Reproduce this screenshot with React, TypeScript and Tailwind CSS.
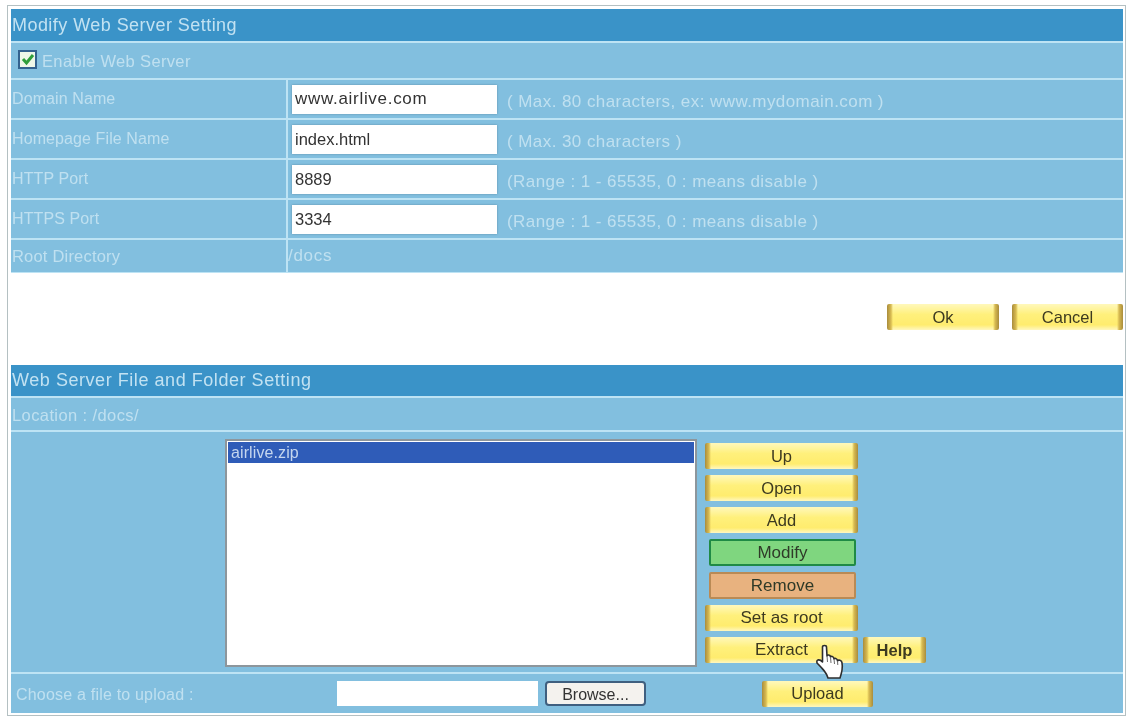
const rows = [
  { label: 'Domain Name', value: 'www.airlive.com', hint: '( Max. 80 characters, ex: www.mydomain.com )', spacing: 'text-[17px] tracking-[0.7px]' },
  { label: 'Homepage File Name', value: 'index.html', hint: '( Max. 30 characters )', spacing: 'text-[16.5px] tracking-normal' },
  { label: 'HTTP Port', value: '8889', hint: '(Range : 1 - 65535, 0 : means disable )', spacing: 'text-[16.5px] tracking-normal' },
  { label: 'HTTPS Port', value: '3334', hint: '(Range : 1 - 65535, 0 : means disable )', spacing: 'text-[16.5px] tracking-normal' },
];

function GoldButton({ label, className = '' }: { label: string; className?: string }) {
  return (
    <button
      className={`flex h-[26px] shrink-0 items-center justify-center rounded-[2px] bg-[linear-gradient(90deg,#a98c3c,#d8bb52_4px,transparent_6px,transparent_calc(100%-6px),#d8bb52_calc(100%-4px),#a98c3c),linear-gradient(#fff8bc,#fff07c_40%,#ffec6e_80%,#fff7c0)] text-[16.5px] text-[#3d3a20] ${className}`}
    >
      {label}
    </button>
  );
}

function ListButton({ label, className }: { label: string; className: string }) {
  return (
    <button className={`mx-[4px] flex h-[27px] w-[147px] items-center justify-center rounded-[2px] border-2 text-[17px] text-[#2f3a28] ${className}`}>
      {label}
    </button>
  );
}

function HandCursor() {
  return (
    <svg viewBox="0 0 30 36" className="absolute left-[804px] top-[212px] h-[36px] w-[30px]">
      <path
        d="M7.5 3C7.5 1 11.5 1 11.5 3L12 12C12 10.5 15.5 10.5 15.5 13C15.5 12 19 12 19 15C19 14 22.5 14 22.5 17C23 15.5 27 16 27 19C28 24 27 28 25 34L13 34C12 29 8 25 2 19C1 15 5 15 7.5 18Z"
        fill="#ffffff"
        stroke="#2e2e2e"
        strokeWidth="1.6"
        strokeLinejoin="round"
      />
      <path d="M12 12L12.5 18M15.5 13L16 19M19 15L19.5 20M22.5 17L22.8 21" fill="none" stroke="#6a6a6a" strokeWidth="1" />
    </svg>
  );
}

export default function App() {
  return (
    <div className="h-[717px] w-[1128px] overflow-hidden bg-white pl-[7px] pt-[5px] font-['Liberation_Sans',Arial,sans-serif] blur-[0.7px]">
      <div className="h-[711px] w-[1119px] border border-[#b4c0c2] pl-[3px] pt-[3px]">
        <section className="flex w-[1112px] flex-col gap-[2px] bg-[#bde3f4] pb-[1px] text-[16px] tracking-[0.1px] text-[#bfe0f0]">
          <div className="flex h-[32px] items-center bg-[#3a93c8] pl-[1px] text-[18px] tracking-[0.45px] text-[#c2e2f2]">
            Modify Web Server Setting
          </div>
          <div className="flex h-[35px] items-center bg-[#82bfdf] pl-[7px]">
            <span className="mb-[3px] mr-[5px] flex h-[19px] w-[19px] items-center justify-center border-2 border-[#33628f] bg-[#eef7e8]">
              <svg viewBox="0 0 14 14" className="h-[14px] w-[14px]">
                <path d="M2 7l3.5 4L12 3" fill="none" stroke="#2f9e3a" strokeWidth="3" />
              </svg>
            </span>
            <span className="pt-[2px] text-[16.5px] tracking-[0.35px]">Enable Web Server</span>
          </div>
          {rows.map((row) => (
            <div key={row.label} className="flex h-[38px] gap-[2px]">
              <div className="flex w-[275px] items-center bg-[#82bfdf] pl-[1px]">{row.label}</div>
              <div className="flex flex-1 items-center bg-[#82bfdf] pl-[4px]">
                <div className={`flex h-[29px] w-[205px] items-center bg-white pl-[3px] text-[#333333] shadow-[0_0_2px_#5f8fa8] ${row.spacing}`}>
                  {row.value}
                </div>
                <span className="ml-[10px] mt-[5px] text-[17px] tracking-[0.43px]">{row.hint}</span>
              </div>
            </div>
          ))}
          <div className="flex h-[32px] gap-[2px]">
            <div className="flex w-[275px] items-center bg-[#82bfdf] pl-[1px] text-[16.5px] tracking-[0.2px]">Root Directory</div>
            <div className="flex flex-1 items-center bg-[#82bfdf] text-[17px] tracking-[0.7px]">/docs</div>
          </div>
        </section>

        <div className="flex h-[92px] w-[1112px] items-center justify-end gap-[13px] pb-[4px]">
          <GoldButton label="Ok" className="w-[112px]" />
          <GoldButton label="Cancel" className="w-[111px]" />
        </div>

        <section className="flex w-[1112px] flex-col gap-[2px] bg-[#bde3f4] text-[16px] tracking-[0.1px] text-[#bfe0f0]">
          <div className="flex h-[31px] items-center bg-[#3a93c8] pl-[1px] text-[18px] tracking-[0.55px] text-[#c2e2f2]">
            Web Server File and Folder Setting
          </div>
          <div className="flex h-[32px] items-center bg-[#82bfdf] pl-[1px] pt-[2px] text-[16.5px] tracking-[0.4px]">Location : /docs/</div>
          <div className="relative flex h-[240px] bg-[#82bfdf] pl-[214px] pt-[7px]">
            <div className="h-[228px] w-[472px] border-2 border-[#8d969c] bg-white p-[1px]">
              <div className="flex h-[21px] items-center bg-[#2f5cb8] pl-[3px] text-[#c5d6ef]">airlive.zip</div>
            </div>
            <div className="ml-[8px] flex flex-col gap-[6px] pt-[4px] tracking-normal">
              <GoldButton label="Up" className="w-[153px]" />
              <GoldButton label="Open" className="w-[153px]" />
              <GoldButton label="Add" className="w-[153px]" />
              <ListButton label="Modify" className="border-[#1f8a45] bg-[#7fd67f]" />
              <ListButton label="Remove" className="border-[#b98a55] bg-[#e8b27f]" />
              <GoldButton label="Set as root" className="w-[153px] text-[17px]" />
              <div className="flex gap-[5px]">
                <GoldButton label="Extract" className="w-[153px] text-[17px]" />
                <GoldButton label="Help" className="w-[63px] font-bold" />
              </div>
            </div>
            <HandCursor />
          </div>
          <div className="flex h-[39px] items-center bg-[#82bfdf] pl-[5px] tracking-[0.2px]">
            <span className="w-[321px] pt-[2px]">Choose a file to upload :</span>
            <div className="h-[25px] w-[201px] bg-white" />
            <button className="ml-[7px] h-[25px] w-[101px] rounded-[4px] border-2 border-[#3f5f7f] bg-[#f4f2ee] text-[16px] tracking-normal text-[#333333]">
              Browse...
            </button>
            <GoldButton label="Upload" className="ml-[116px] w-[111px] tracking-normal" />
          </div>
        </section>
      </div>
    </div>
  );
}
